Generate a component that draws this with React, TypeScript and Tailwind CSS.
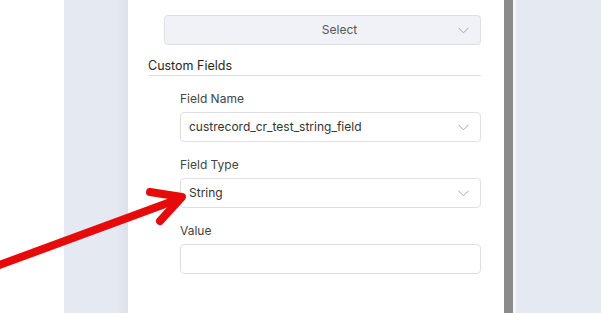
import React from "react";

const Chevron = () => (
  <svg width="11" height="7" viewBox="0 0 11 7" fill="none" className="shrink-0">
    <polyline points="0.5 0.8 5.5 5.8 10.5 0.8" stroke="#a3a5ac" strokeWidth="1" />
  </svg>
);

function Field({ label, value, chevron = true }: { label: string; value?: string; chevron?: boolean }) {
  return (
    <div className="flex flex-col">
      <div className="h-[19px] pt-[1px] leading-[18px] text-[12px] text-[#444]">{label}</div>
      <div className="mt-[4px] h-[30px] flex items-center justify-between rounded-[4px] border border-[#dcdfe8] bg-white pl-[8px] pr-[11px]">
        <span className="text-[12px] text-[#333]">{value}</span>
        {chevron && <Chevron />}
      </div>
    </div>
  );
}

export default function App() {
  return (
    <div
      className="relative flex h-[313px] w-[601px] overflow-hidden bg-white"
      style={{ fontFamily: "Inter, 'Noto Sans', sans-serif" }}
    >
      <div className="w-[64px] shrink-0 bg-white" />
      <div className="w-[64px] shrink-0 bg-gradient-to-r from-[#e5e9f2] from-80% to-[#dde1ea]" />

      {/* form panel */}
      <div className="w-[376px] shrink-0 bg-white pl-[20px] pr-[23px]">
        <div className="pl-[16px]">
          <div className="mt-[-16px] h-[18px] leading-[18px] text-[12px] text-[#444]">Display Type</div>
          <div className="mt-[13px] h-[30px] flex items-center rounded-[4px] border border-[#dcdfe8] bg-[#f0f2f7] pl-[56px] pr-[11px]">
            <span className="flex-1 text-center text-[12px] text-[#555]">Select</span>
            <Chevron />
          </div>
        </div>

        <div className="mt-[12px] border-b border-[#dde1ea] leading-[18px] text-[12.5px] text-[#262626]">
          Custom Fields
        </div>

        <div className="pl-[32px] pt-[13px] flex flex-col gap-[13px]">
          <Field label="Field Name" value="custrecord_cr_test_string_field" />
          <Field label="Field Type" value="String" />
          <Field label="Value" chevron={false} />
        </div>
      </div>

      <div className="w-[9px] shrink-0 bg-[#8b8b8b]" />
      <div className="w-[3px] shrink-0 bg-[#f4f5f9]" />
      <div className="flex-1 bg-[#e5e9f2]" />

      {/* annotation arrow */}
      <svg className="pointer-events-none absolute left-0 top-0" width="601" height="313" viewBox="0 0 601 313">
        <line x1="-6" y1="267" x2="176" y2="200" stroke="#e60a0a" strokeWidth="8" strokeLinecap="round" />
        <polyline
          points="150,192 182,197 160,221"
          fill="none"
          stroke="#e60a0a"
          strokeWidth="8"
          strokeLinecap="round"
          strokeLinejoin="round"
        />
      </svg>
    </div>
  );
}
